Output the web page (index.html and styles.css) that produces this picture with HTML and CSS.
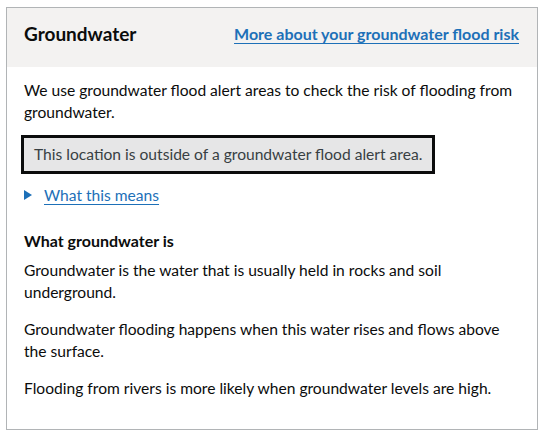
FILE: index.html
```html
<!DOCTYPE html>
<html lang="en">
<head>
<meta charset="utf-8">
<title>Groundwater</title>
<link rel="stylesheet" href="styles.css">
</head>
<body>
<section class="card">
  <header class="card-header">
    <h2 class="card-title">Groundwater</h2>
    <a class="card-link" href="#">More about your groundwater flood risk</a>
  </header>
  <div class="card-body">
    <p class="text text-intro">We use groundwater flood alert areas to check the risk of flooding from groundwater.</p>
    <div class="inset">This location is outside of a groundwater flood alert area.</div>
    <div class="details">
      <span class="details-arrow"></span>
      <a class="details-link" href="#">What this means</a>
    </div>
    <h3 class="subheading">What groundwater is</h3>
    <p class="text">Groundwater is the water that is usually held in rocks and soil underground.</p>
    <p class="text">Groundwater flooding happens when this water rises and flows above the surface.</p>
    <p class="text">Flooding from rivers is more likely when groundwater levels are high.</p>
  </div>
</section>
</body>
</html>
```
FILE: styles.css
```css
html, body {
  margin: 0;
  padding: 0;
  background: #ffffff;
}
body {
  padding: 7px 5px 0 6px;
  font-family: Lato, "Liberation Sans", sans-serif;
  color: #0b0c0c;
  font-size: 15.6px;
  line-height: 22px;
}
.card {
  border: 1px solid #b1b4b6;
  box-sizing: border-box;
  height: 423px;
}
.card-header {
  background: #f3f2f1;
  display: flex;
  justify-content: space-between;
  align-items: center;
  padding: 0 18px 8px 17px;
  height: 51px;
}
.card-title {
  margin: 0;
  font-size: 19px;
  font-weight: 700;
}
.card-link {
  color: #1d70b8;
  font-size: 16px;
  font-weight: 700;
  text-decoration: underline;
  text-underline-offset: 3px;
}
.card-body {
  padding: 12px 17px 0 17px;
}
.text {
  margin: 0 0 15px 0;
}
.text-intro {
  margin-bottom: 12px;
}
.inset {
  display: inline-block;
  margin: 0 0 10px -3px;
  border: 3px solid #0b0c0c;
  background: #e6e6e7;
  color: #383f43;
  padding: 6px 10px;
  line-height: 21px;
}
.details {
  display: flex;
  align-items: center;
  gap: 12px;
  margin-bottom: 24px;
}
.details-arrow {
  width: 0;
  height: 0;
  border-top: 5px solid transparent;
  border-bottom: 5px solid transparent;
  border-left: 8px solid #1d70b8;
}
.details-link {
  color: #1d70b8;
  text-decoration: underline;
  text-underline-offset: 3px;
}
.subheading {
  margin: 0 0 7px 0;
  font-size: 16px;
  font-weight: 700;
}
```
